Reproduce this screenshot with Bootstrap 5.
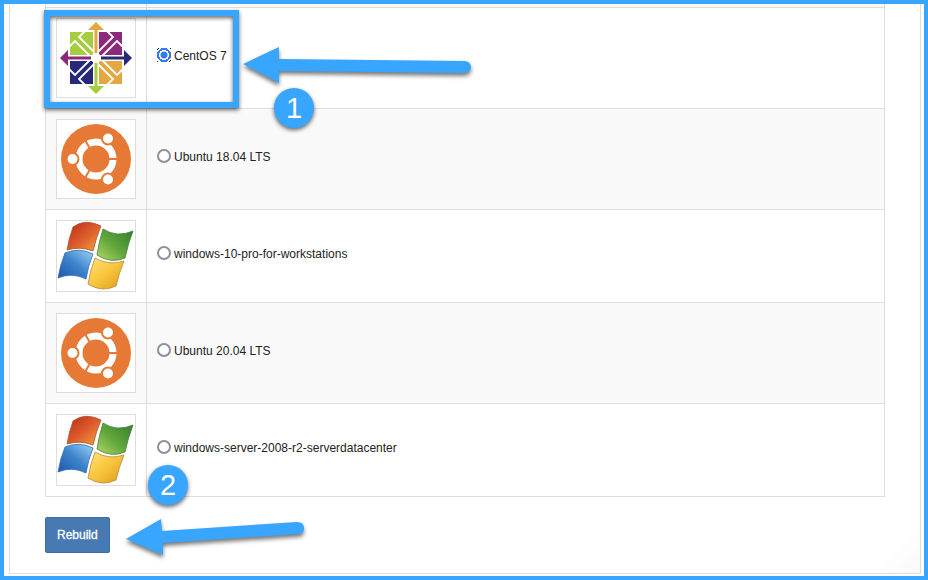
<!DOCTYPE html>
<html lang="en">
<head>
<meta charset="utf-8">
<meta name="viewport" content="width=device-width, initial-scale=1">
<title>Rebuild server</title>
<link href="https://cdn.jsdelivr.net/npm/bootstrap@5.3.0/dist/css/bootstrap.min.css" rel="stylesheet">
<style>
:root { --callout: #38a5ff; --rule: #ddd; }
body { font-family: "Liberation Sans", Arial, sans-serif; font-size: 12px; line-height: 18px; color: #222; background: #fff; }
.page-frame { border: 4px solid var(--callout); padding: 0 3px 2px 5px; }
.panel-body { border: 1px solid var(--rule); border-top: 0; padding: 0 35px 20px; background: linear-gradient(315deg, #f9f9f9, #fff 40px); }
.os-table { border-collapse: collapse; border: 1px solid var(--rule); border-top: 0; --bs-table-bg: transparent; --bs-table-color: #222; }
.os-table > tbody > tr > td { border: 1px solid var(--rule); padding: 10px; vertical-align: middle; background: #fff; box-shadow: none; }
.os-table > tbody > tr:first-child > td { height: 3px; padding: 0; border-top: 0; }
.os-table > tbody > tr:nth-child(odd) > td { background: #f9f9f9; }
.os-logo-cell { width: 101px; }
.os-logo { width: 80px; border: 1px solid var(--rule); background: #fff; }
.os-logo svg { display: block; width: 100%; }
.os-choice { margin-bottom: 5px; gap: 3px; }
.os-choice label { padding-top: 2px; }
.os-radio { appearance: none; width: 14px; height: 14px; margin: 0; border: 2px solid #8f8f9d; border-radius: 50%; background: #fff; }
.os-radio:checked { border: 0; border-radius: 0; background: radial-gradient(circle, #3478f6 3px, #fff 4px, #fff 5px, #3478f6 5px, #3478f6 7px, #fff 7px, #fff 8px, transparent 8px), repeating-conic-gradient(#222 0 25%, #fff 0 50%) 0 0 / 2px 2px; }
.rebuild-btn { --bs-btn-bg: #477ab3; --bs-btn-border-color: #3d6da3; --bs-btn-color: #fff; --bs-btn-hover-bg: #3d6da3; --bs-btn-padding-x: 11px; --bs-btn-padding-y: 8px; --bs-btn-font-size: 12px; --bs-btn-line-height: 18px; --bs-btn-border-radius: 2px; -webkit-text-stroke: 0.3px; }
.callout-layer { position: absolute; pointer-events: none; }
.callout-box { left: -1px; top: 6px; width: 195px; height: 98px; border: 6px solid var(--callout); filter: drop-shadow(0 2px 2px #0009); }
.callout-num { width: 40px; height: 40px; border-radius: 50%; background: var(--callout); color: #fff; font-size: 29px; box-shadow: 0 2px 4px #0009; }
.num-one { left: 229px; top: 84px; }
.num-two { left: 103px; top: 461px; }
.callout-arrow { fill: var(--callout); filter: drop-shadow(0 3px 2px #0008); overflow: visible; }
.arrow-one { left: 198px; top: 42px; }
.arrow-two { left: 81px; top: 0; }
</style>
</head>
<body>
<svg class="position-absolute" width="0" height="0" aria-hidden="true">
  <defs>
    <linearGradient id="winRed" x1="0" y1="0" x2="1" y2="1"><stop offset="0" stop-color="#b82a16"/><stop offset=".5" stop-color="#dc5a2c"/><stop offset="1" stop-color="#f5a63a"/></linearGradient>
    <linearGradient id="winGreen" x1="1" y1="0" x2="0" y2="1"><stop offset="0" stop-color="#2f7c2c"/><stop offset=".55" stop-color="#63a83c"/><stop offset="1" stop-color="#b5d865"/></linearGradient>
    <linearGradient id="winBlue" x1="0" y1="1" x2="1" y2="0"><stop offset="0" stop-color="#1d55a8"/><stop offset=".5" stop-color="#3c83cd"/><stop offset="1" stop-color="#9dd3f3"/></linearGradient>
    <linearGradient id="winGold" x1="0" y1="0" x2="1" y2="1"><stop offset="0" stop-color="#ffe27a"/><stop offset=".5" stop-color="#f8c53d"/><stop offset="1" stop-color="#d99a1b"/></linearGradient>
    <symbol id="centos" viewBox="0 0 78 78">
      <path fill="#a5cd3f" d="M13 13H36V36H13z"/><path fill="#8b2a7c" d="M42 13H65V36H42z"/>
      <path fill="#272878" d="M13 42H36V65H13z"/><path fill="#e4a843" d="M42 42H65V65H42z"/>
      <g fill="none" stroke="#fff" stroke-width="1.800">
        <path d="M28 12 22 18 39 35 56 18 50 12"/>
        <path d="M28 66 22 60 39 43 56 60 50 66"/>
        <path d="M12 28 18 22 35 39 18 56 12 50"/>
        <path d="M66 28 60 22 43 39 60 56 66 50"/>
      </g>
      <path fill="#e4a843" d="M31 11 39 3 47 11H40.500V34H37.500V11z"/>
      <path fill="#272878" d="M67 31 75 39 67 47V40.500H44V37.500H67z"/>
      <path fill="#a5cd3f" d="M47 67 39 75 31 67H37.500V44H40.500V67z"/>
      <path fill="#8b2a7c" d="M11 47 3 39 11 31V37.500H34V40.500H11z"/>
      <circle cx="39" cy="39" r="5" fill="#fff"/>
    </symbol>
    <symbol id="ubuntu" viewBox="0 0 78 78">
      <circle cx="39" cy="39" r="35" fill="#e67936"/>
      <circle cx="39" cy="39" r="17" fill="none" stroke="#fff" stroke-width="7"/>
      <path stroke="#e67936" stroke-width="2" d="M39 39H61M39 39 28 20M39 39 28 58"/>
      <g fill="#fff" stroke="#e67936" stroke-width="2"><circle cx="15.500" cy="39" r="6"/><circle cx="51" cy="18.500" r="6"/><circle cx="51" cy="59.500" r="6"/></g>
    </symbol>
    <symbol id="windows" viewBox="0 0 78 70">
      <g stroke-width=".8">
      <path fill="url(#winRed)" stroke="#a8552f" d="M16 6Q28-3 44 5Q39 17 36 30Q23 25 10 29Q12 17 16 6Z"/>
      <path fill="url(#winGreen)" stroke="#45803a" d="M46 8Q60 17 76 10Q71 23 68 37Q54 43 40 34Q42 20 46 8Z"/>
      <path fill="url(#winBlue)" stroke="#386eac" d="M8 32Q22 26 36 33Q31 45 29 58Q15 51 1 57Q3 44 8 32Z"/>
      <path fill="url(#winGold)" stroke="#b88a38" d="M38 37Q52 45 67 40Q62 52 59 65Q45 72 31 63Q33 50 38 37Z"/>
      </g>
    </symbol>
  </defs>
</svg>

<main class="page-frame min-vh-100 d-flex">
  <form class="panel-body flex-grow-1" onsubmit="return false">
    <div class="position-relative">
      <table class="os-table table mb-0" aria-label="Operating systems">
        <tbody>
          <tr aria-hidden="true"><td class="os-logo-cell"></td><td></td></tr>
          <tr>
            <td class="os-logo-cell"><div class="os-logo"><svg viewBox="0 0 78 78" role="img" aria-label="CentOS logo"><use href="#centos"/></svg></div></td>
            <td><div class="os-choice d-flex align-items-center"><input class="os-radio" type="radio" name="os" id="os1" checked><label for="os1">CentOS 7</label></div></td>
          </tr>
          <tr>
            <td><div class="os-logo"><svg viewBox="0 0 78 78" role="img" aria-label="Ubuntu logo"><use href="#ubuntu"/></svg></div></td>
            <td><div class="os-choice d-flex align-items-center"><input class="os-radio" type="radio" name="os" id="os2"><label for="os2">Ubuntu 18.04 LTS</label></div></td>
          </tr>
          <tr>
            <td><div class="os-logo"><svg viewBox="0 0 78 70" role="img" aria-label="Windows logo"><use href="#windows"/></svg></div></td>
            <td><div class="os-choice d-flex align-items-center"><input class="os-radio" type="radio" name="os" id="os3"><label for="os3">windows-10-pro-for-workstations</label></div></td>
          </tr>
          <tr>
            <td><div class="os-logo"><svg viewBox="0 0 78 78" role="img" aria-label="Ubuntu logo"><use href="#ubuntu"/></svg></div></td>
            <td><div class="os-choice d-flex align-items-center"><input class="os-radio" type="radio" name="os" id="os4"><label for="os4">Ubuntu 20.04 LTS</label></div></td>
          </tr>
          <tr>
            <td><div class="os-logo"><svg viewBox="0 0 78 70" role="img" aria-label="Windows logo"><use href="#windows"/></svg></div></td>
            <td><div class="os-choice d-flex align-items-center"><input class="os-radio" type="radio" name="os" id="os5"><label for="os5">windows-server-2008-r2-serverdatacenter</label></div></td>
          </tr>
        </tbody>
      </table>
      <div class="callout-layer callout-box"></div>
      <svg class="callout-layer callout-arrow arrow-one" width="230" height="40" aria-hidden="true"><path d="M0 18 36 1V13L222 15Q228 16 228 21T222 27L36 25V37Z"/></svg>
      <div class="callout-layer callout-num num-one d-flex align-items-center justify-content-center">1</div>
      <div class="callout-layer callout-num num-two d-flex align-items-center justify-content-center">2</div>
    </div>
    <div class="position-relative mt-3 pt-1">
      <button type="submit" class="btn rebuild-btn">Rebuild</button>
      <svg class="callout-layer callout-arrow arrow-two" width="180" height="44" aria-hidden="true"><path d="M0 26 35 6 36 18 171 9Q178 9 178 15T172 21L37 30V42Z"/></svg>
    </div>
  </form>
</main>
<script src="https://cdn.jsdelivr.net/npm/bootstrap@5.3.0/dist/js/bootstrap.bundle.min.js"></script>
</body>
</html>
